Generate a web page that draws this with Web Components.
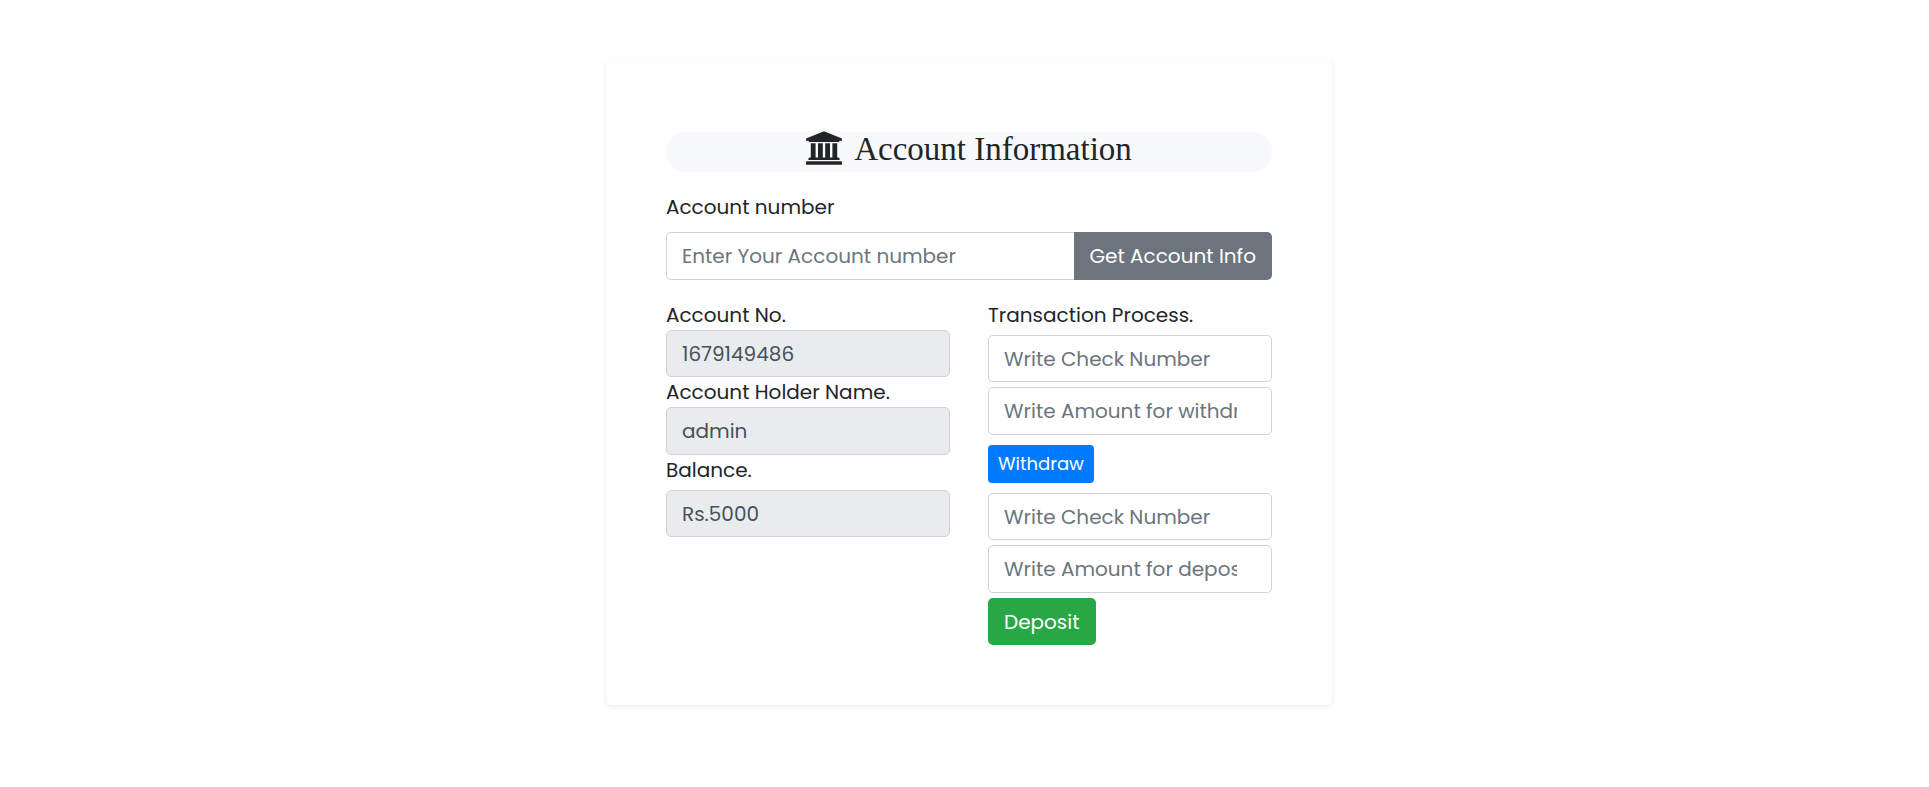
<!DOCTYPE html>
<html lang="en">
<head>
<meta charset="utf-8">
<meta name="viewport" content="width=device-width, initial-scale=1">
<title>Account Information</title>
<style>
  body { margin: 0; background: #fff; color: #212529; font: 400 20px/30px Poppins, Inter, sans-serif; }
</style>
</head>
<body>
<account-page></account-page>

<template id="page-template">
  <style>
    :host { display: block; padding: 57px 0 57px 9px; }
    .row { display: grid; grid-template-columns: 1fr 1fr; column-gap: 38px; margin-top: 20px; }
  </style>
  <account-card>
    <page-heading>Account Information</page-heading>
    <account-lookup></account-lookup>
    <div class="row">
      <account-details></account-details>
      <transaction-panel></transaction-panel>
    </div>
  </account-card>
</template>

<template id="card-template">
  <style>
    :host { display: block; box-sizing: border-box; max-width: 726px; margin: 0 auto; padding: 75px 60px 60px; background: #fefefe; border-radius: 5px; box-shadow: 0 2px 5px rgba(0, 0, 0, .075); }
  </style>
  <slot></slot>
</template>

<template id="heading-template">
  <style>
    :host { display: block; }
    h3 { display: flex; justify-content: center; align-items: center; gap: 12px; height: 40px; margin: 0 0 20px; border-radius: 20px; background: #f8f9fa; font: 400 33px/40px "Liberation Serif", "Times New Roman", serif; }
    svg { display: block; width: 36px; height: 34px; margin-bottom: 8px; fill: currentColor; }
    span { margin-bottom: 6px; }
  </style>
  <h3>
    <svg viewBox="0 0 1920 1792" aria-hidden="true"><path d="M960 0l960 384v128h-128q0 26-20.500 45t-48.500 19H197q-28 0-48.500-19T128 512H0V384zM256 640h256v768h128V640h256v768h128V640h256v768h128V640h256v768h59q28 0 48.500 19t20.500 45v64H128v-64q0-26 20.500-45t48.500-19h59V640zm1595 960q28 0 48.500 19t20.500 45v128H0v-128q0-26 20.500-45t48.500-19h1782z"/></svg>
    <span><slot></slot></span>
  </h3>
</template>

<template id="lookup-template">
  <style>
    :host { display: block; }
    label { display: block; margin-bottom: 10px; }
    form { display: flex; height: 48px; }
    input { flex: 1; min-width: 0; box-sizing: border-box; padding: 0 15px; border: 1px solid #ced4da; border-right: 0; border-radius: 5px 0 0 5px; background: #fff; color: #495057; font: inherit; }
    input::placeholder { color: #6c757d; opacity: 1; }
    button { padding: 0 16px; border: 0; border-radius: 0 5px 5px 0; background: #6c757d; color: #fff; font: inherit; cursor: pointer; }
  </style>
  <label for="number">Account number</label>
  <form>
    <input id="number" type="text" placeholder="Enter Your Account number">
    <button type="button">Get Account Info</button>
  </form>
</template>

<template id="details-template">
  <style>
    :host { display: block; min-width: 0; }
    label { display: block; }
    input { display: block; width: 100%; height: 47px; box-sizing: border-box; padding: 0 15px; border: 1px solid #ced4da; border-radius: 5px; background: #e9ecef; color: #495057; font: inherit; }
    #holder { height: 48px; }
    #balance { margin-top: 5px; }
  </style>
  <label for="no">Account No.</label>
  <input id="no" value="1679149486" readonly>
  <label for="holder">Account Holder Name.</label>
  <input id="holder" value="admin" readonly>
  <label for="balance">Balance.</label>
  <input id="balance" value="Rs.5000" readonly>
</template>

<template id="transaction-template">
  <style>
    :host { display: block; min-width: 0; }
    h4 { margin: 0 0 5px; font: inherit; }
    form { display: grid; row-gap: 5px; justify-items: start; }
    form + form { margin-top: 10px; }
    input { display: block; width: 100%; height: 47px; box-sizing: border-box; padding: 0 15px; border: 1px solid #ced4da; border-radius: 5px; background: #fff; color: #495057; font: inherit; }
    input[type="number"] { height: 48px; padding-right: 19px; }
    input::placeholder { color: #6c757d; opacity: 1; }
    button { height: 47px; padding: 0 16px; border: 0; border-radius: 5px; background: #28a745; color: #fff; font: inherit; cursor: pointer; }
    .small { height: 38px; margin-top: 5px; padding: 0 10px; border-radius: 4px; background: #007bff; font-size: 18px; }
  </style>
  <h4>Transaction Process.</h4>
  <form>
    <input type="text" placeholder="Write Check Number" aria-label="Withdrawal check number">
    <input type="number" placeholder="Write Amount for withdraw" aria-label="Withdrawal amount">
    <button class="small" type="button">Withdraw</button>
  </form>
  <form>
    <input type="text" placeholder="Write Check Number" aria-label="Deposit check number">
    <input type="number" placeholder="Write Amount for deposit" aria-label="Deposit amount">
    <button type="button">Deposit</button>
  </form>
</template>

<script>
  const define = (name, templateId) => customElements.define(name, class extends HTMLElement {
    constructor() {
      super();
      this.attachShadow({ mode: "open" }).append(document.getElementById(templateId).content.cloneNode(true));
    }
  });
  define("account-card", "card-template");
  define("page-heading", "heading-template");
  define("account-lookup", "lookup-template");
  define("account-details", "details-template");
  define("transaction-panel", "transaction-template");
  define("account-page", "page-template");
</script>
</body>
</html>
